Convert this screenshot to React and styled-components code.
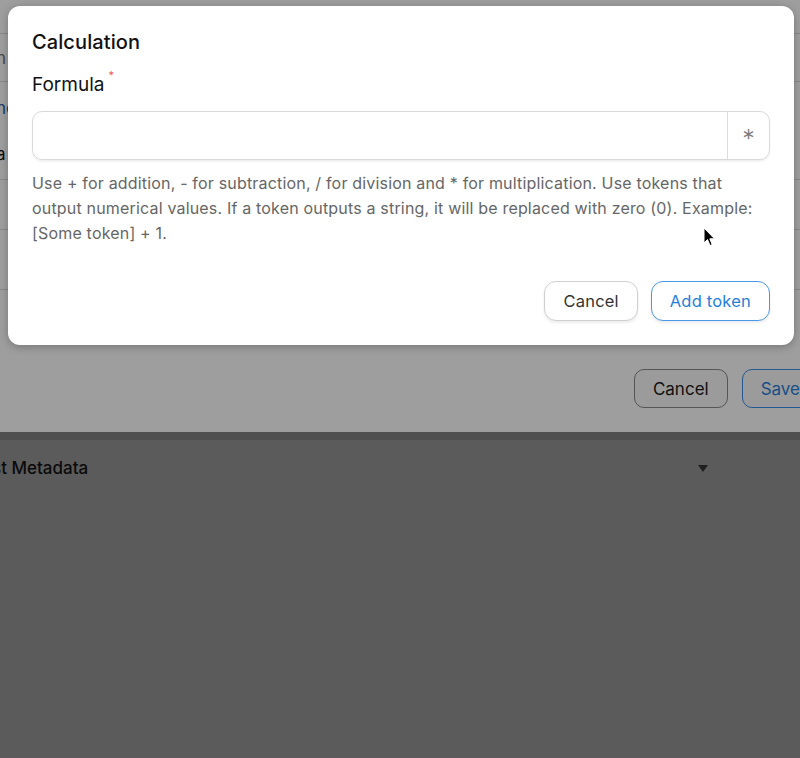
import React from "react";
import styled, { createGlobalStyle } from "styled-components";

const Global = createGlobalStyle`
  html, body { margin: 0; padding: 0; }
  body {
    width: 800px;
    height: 758px;
    overflow: hidden;
    font-family: Inter, "Noto Sans", "Liberation Sans", sans-serif;
    background: #939393;
  }
  #root { height: 758px; }
`;

const Stage = styled.div`
  position: relative;
  width: 800px;
  height: 758px;
  overflow: hidden;
`;

const Page = styled.div`
  display: flex;
  flex-direction: column;
  height: 100%;
`;

const TopSection = styled.div`
  background: #ffffff;
  height: 432px;
  display: flex;
  flex-direction: column;
`;

const Row = styled.div`
  height: ${(p) => p.$h}px;
  box-sizing: border-box;
  border-bottom: 1px solid #dcdcdc;
  display: flex;
  flex-direction: column;
  justify-content: center;
  gap: 26px;
  margin-left: -4px;
  font-size: 17px;
  color: #111;
`;

const RowText = styled.span`
  color: ${(p) => p.$color || "#111"};
`;

const ButtonRow = styled.div`
  display: flex;
  justify-content: flex-end;
  gap: 14px;
  margin-top: 79px;
  margin-right: -19px;
`;

const PageButton = styled.div`
  height: 39px;
  box-sizing: border-box;
  padding: 0 18px;
  border-radius: 10px;
  display: flex;
  align-items: center;
  font-size: 17px;
  background: #fafafa;
  border: 1px solid ${(p) => (p.$primary ? "#3c8ee8" : "#8a8a8a")};
  color: ${(p) => (p.$primary ? "#2a7fd8" : "#1a1a1a")};
`;

const Band = styled.div`
  height: 8px;
  background: #818181;
`;

const LowerSection = styled.div`
  flex: 1;
  background: #939393;
  padding: 18px 0 0 0;
`;

const MetaHeader = styled.div`
  display: flex;
  align-items: center;
  justify-content: space-between;
  width: 716px;
  margin-left: -8px;
  font-size: 17px;
  font-weight: 500;
  color: #111;
`;

const Caret = styled.span`
  width: 0;
  height: 0;
  border-left: 5px solid transparent;
  border-right: 5px solid transparent;
  border-top: 7px solid #333;
`;

const Overlay = styled.div`
  position: absolute;
  inset: 0;
  background: rgba(0, 0, 0, 0.38);
`;

const Modal = styled.div`
  position: absolute;
  left: 8px;
  top: 6px;
  width: 786px;
  height: 339px;
  box-sizing: border-box;
  background: #fff;
  border-radius: 12px;
  padding: 24px 24px 24px 24px;
  display: flex;
  flex-direction: column;
  box-shadow: 0 2px 8px rgba(0, 0, 0, 0.25);
`;

const Title = styled.h2`
  margin: 0;
  font-size: 20px;
  line-height: 24px;
  font-weight: 500;
  letter-spacing: 0.1px;
  color: #111;
`;

const Label = styled.div`
  margin-top: 19px;
  font-size: 19px;
  line-height: 24px;
  color: #111;
  display: flex;
  align-items: flex-start;
`;

const Required = styled.span`
  color: #e55;
  font-size: 11px;
  line-height: 11px;
  margin-left: 4px;
  margin-top: -3px;
`;

const InputGroup = styled.div`
  margin-top: 14px;
  height: 49px;
  box-sizing: border-box;
  border: 1px solid #d9d9d9;
  border-radius: 10px;
  display: flex;
  box-shadow: 0 2px 2px rgba(0, 0, 0, 0.06);
`;

const Field = styled.div`
  flex: 1;
`;

const Addon = styled.div`
  width: 42px;
  border-left: 1px solid #dcdcdc;
  display: flex;
  align-items: center;
  justify-content: center;
  font-size: 25px;
  font-weight: 300;
  color: #777;
  padding-top: 7px;
  box-sizing: border-box;
`;

const Help = styled.p`
  margin: 11px 0 0 0;
  font-size: 16px;
  line-height: 25px;
  color: #666;
  letter-spacing: 0.18px;
`;

const Actions = styled.div`
  margin-top: auto;
  display: flex;
  justify-content: flex-end;
  gap: 13px;
`;

const Button = styled.button`
  height: 40px;
  box-sizing: border-box;
  padding: 0 18px;
  border-radius: 12px;
  font-family: inherit;
  font-size: 16.5px;
  letter-spacing: 0.2px;
  background: #fff;
  border: 1px solid ${(p) => (p.$primary ? "#4a98ea" : "#cfcfcf")};
  color: ${(p) => (p.$primary ? "#1f80d9" : "#333")};
  box-shadow: 0 2px 3px rgba(0, 0, 0, 0.08);
`;

const Cursor = styled.svg`
  position: absolute;
  left: 703px;
  top: 227px;
`;

export default function App() {
  return (
    <>
      <Global />
      <Stage>
        <Page>
          <TopSection>
            <Row $h={34} />
            <Row $h={48}>
              <RowText $color="#777">n</RowText>
            </Row>
            <Row $h={98}>
              <RowText $color="#2b5fb0">nc</RowText>
              <RowText>a</RowText>
            </Row>
            <Row $h={50} />
            <Row $h={60} />
            <ButtonRow>
              <PageButton>Cancel</PageButton>
              <PageButton $primary>Save</PageButton>
            </ButtonRow>
          </TopSection>
          <Band />
          <LowerSection>
            <MetaHeader>
              <span>st Metadata</span>
              <Caret />
            </MetaHeader>
          </LowerSection>
        </Page>
        <Overlay />
        <Modal>
          <Title>Calculation</Title>
          <Label>
            Formula<Required>*</Required>
          </Label>
          <InputGroup>
            <Field />
            <Addon>*</Addon>
          </InputGroup>
          <Help>
            Use + for addition, - for subtraction, / for division and * for multiplication. Use tokens that
            output numerical values. If a token outputs a string, it will be replaced with zero (0). Example:
            [Some token] + 1.
          </Help>
          <Actions>
            <Button>Cancel</Button>
            <Button $primary>Add token</Button>
          </Actions>
        </Modal>
        <Cursor width="13" height="20" viewBox="0 0 13 20">
          <path d="M1 1 L1 16 L4.5 12.5 L7 18.5 L9.2 17.6 L6.8 11.8 L11.5 11.8 Z" fill="#000" stroke="#fff" strokeWidth="1" />
        </Cursor>
      </Stage>
    </>
  );
}
